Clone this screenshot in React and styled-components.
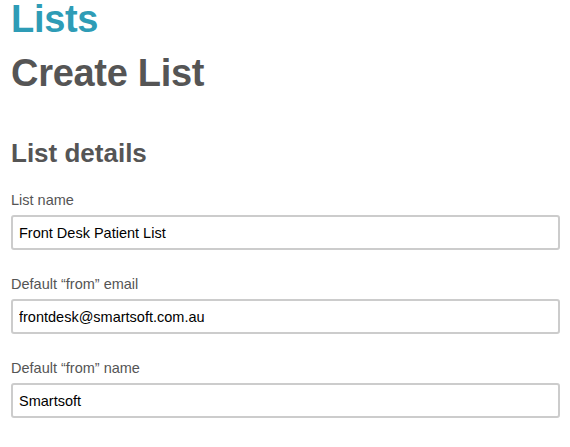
import React from 'react'
import { styled, createGlobalStyle } from 'styled-components'

const GlobalStyle = createGlobalStyle`
    body{
        margin: 0;
        background: #fff;
        font-family: "Liberation Sans", Arial, sans-serif;
    }
`;

const fields = [
    { label: 'List name', value: 'Front Desk Patient List' },
    { label: 'Default \u201cfrom\u201d email', value: 'frontdesk@smartsoft.com.au' },
    { label: 'Default \u201cfrom\u201d name', value: 'Smartsoft' },
];

const App = () => {
    return (
        <>
            <GlobalStyle />
            <StyledPage>
                <StyledCrumb>Lists</StyledCrumb>
                <StyledTitle>Create List</StyledTitle>
                <StyledSection>List details</StyledSection>
                <StyledForm>
                    {fields.map((f) => (
                        <StyledField key={f.label}>
                            <label>{f.label}</label>
                            <input type="text" defaultValue={f.value} />
                        </StyledField>
                    ))}
                </StyledForm>
            </StyledPage>
        </>
    );
}

const StyledPage = styled.div`
    padding: 0 10px 0 11px;
`;
const StyledCrumb = styled.div`
    font-size: 38px;
    font-weight: bold;
    line-height: 38px;
    color: #2e9cb6;
    letter-spacing: -0.3px;
`;
const StyledTitle = styled.h1`
    margin: 14px 0 0;
    font-size: 38px;
    font-weight: bold;
    line-height: 42px;
    color: #555;
    letter-spacing: -0.3px;
`;
const StyledSection = styled.h2`
    margin: 44px 0 0;
    font-size: 26px;
    font-weight: bold;
    line-height: 30px;
    color: #555;
`;
const StyledForm = styled.form`
    display: flex;
    flex-direction: column;
    gap: 26px;
    margin-top: 24px;
`;
const StyledField = styled.div`
    display: flex;
    flex-direction: column;
    gap: 6px;

    label{
        font-size: 14.5px;
        line-height: 17px;
        color: #555;
    }
    input{
        box-sizing: border-box;
        height: 35px;
        width: 100%;
        padding: 0 6px;
        border: 2px solid #ccc;
        border-radius: 3px;
        font-family: "Liberation Sans", Arial, sans-serif;
        font-size: 14.5px;
        color: #000;
        background: #fff;
        outline: none;
    }
`;

export default App;
